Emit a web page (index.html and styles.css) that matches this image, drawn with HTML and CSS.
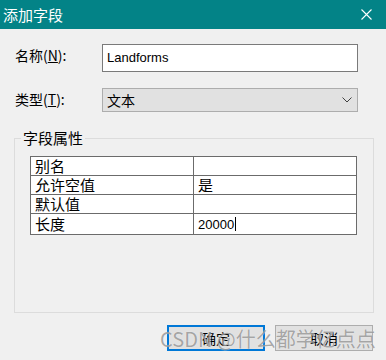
FILE: index.html
```html
<!DOCTYPE html>
<html lang="zh-CN">
<head>
    <meta charset="UTF-8">
    <title>添加字段</title>
    <link rel="stylesheet" href="styles.css">
</head>
<body>
    <div class="dialog">
        <div class="titlebar">
            <span class="title">添加字段</span>
            <svg class="close" width="11" height="11" viewBox="0 0 11 11">
                <path d="M0.5 0.5 L10.5 10.5 M10.5 0.5 L0.5 10.5" stroke="#fff" stroke-width="1.1" fill="none"/>
            </svg>
        </div>

        <div class="content">
            <div class="field-row">
                <label class="field-label">名称(<u>N</u>):</label>
                <div class="textbox">Landforms</div>
            </div>
            <div class="field-row combo-row">
                <label class="field-label">类型(<u>T</u>):</label>
                <div class="combo">
                    <span>文本</span>
                    <svg class="chevron" width="10" height="6" viewBox="0 0 10 6">
                        <path d="M0.5 0.5 L5 5 L9.5 0.5" stroke="#404040" stroke-width="1" fill="none"/>
                    </svg>
                </div>
            </div>

            <fieldset class="group">
                <legend>字段属性</legend>
                <table class="props">
                    <tr><td class="key">别名</td><td></td></tr>
                    <tr><td class="key">允许空值</td><td>是</td></tr>
                    <tr><td class="key">默认值</td><td></td></tr>
                    <tr><td class="key">长度</td><td><span class="num">20000</span><span class="caret"></span></td></tr>
                </table>
            </fieldset>

            <div class="buttons">
                <button class="btn btn-default">确定</button>
                <button class="btn">取消</button>
            </div>
        </div>

        <div class="watermark">CSDN @什么都学亿点点</div>
    </div>
</body>
</html>
```

FILE: styles.css
```css
body {
    margin: 0;
    background-color: #f0f0f0;
    font-family: "Noto Sans CJK SC", "Liberation Sans", sans-serif;
    color: #000;
}

.dialog {
    position: relative;
    width: 386px;
    height: 360px;
    overflow: hidden;
    background-color: #f0f0f0;
}

.titlebar {
    height: 29px;
    background-color: #038387;
    color: #fff;
    display: flex;
    align-items: center;
    justify-content: space-between;
    padding: 0 14px 0 3px;
    font-size: 15px;
}

.close {
    display: block;
}

.content {
    padding: 15px 12px 0 14px;
}

.field-row {
    display: flex;
    align-items: flex-start;
}

.combo-row {
    margin-top: 16px;
}

.field-label {
    width: 87px;
    padding-left: 1px;
    font-size: 14px;
    line-height: 20px;
    margin-top: 1px;
}

.field-label u {
    text-decoration-thickness: 1px;
}

.textbox {
    width: 256px;
    height: 28px;
    box-sizing: border-box;
    border: 1px solid #7a7a7a;
    background-color: #fff;
    padding-left: 4px;
    font-family: "Liberation Sans", sans-serif;
    font-size: 13px;
    line-height: 26px;
}

.combo {
    width: 256px;
    height: 24px;
    box-sizing: border-box;
    border: 1px solid #adadad;
    background-color: #e1e1e1;
    padding: 0 5px 0 4px;
    display: flex;
    align-items: center;
    justify-content: space-between;
    font-size: 14px;
}

.chevron {
    display: block;
}

/* 字段属性 분组 */
.group {
    margin: 16px 0 0 0;
    padding: 8px 16px 77px 15px;
    border: 1px solid #dcdcdc;
}

.group legend {
    margin-left: -9px;
    padding: 0 2px;
    font-size: 15px;
    line-height: 20px;
}

.props {
    width: 100%;
    border-collapse: collapse;
    background-color: #fff;
    font-size: 15px;
}

.props td {
    border: 1px solid #6b6b6b;
    height: 18px;
    padding: 0 4px;
    line-height: 18px;
    box-sizing: border-box;
}

.props td.key {
    width: 163px;
}

.num {
    font-family: "Liberation Sans", sans-serif;
    font-size: 13px;
}

.caret {
    display: inline-block;
    width: 1px;
    height: 14px;
    background-color: #000;
    vertical-align: -2px;
    margin-left: 1px;
}

.buttons {
    display: flex;
    justify-content: flex-end;
    gap: 10px;
    margin-top: 12px;
    margin-right: 1px;
}

.btn {
    width: 98px;
    height: 26px;
    box-sizing: border-box;
    border: 1px solid #adadad;
    background-color: #e1e1e1;
    font-family: "Noto Sans CJK SC", sans-serif;
    font-size: 14px;
    color: #000;
    padding: 0;
}

.btn-default {
    border: 2px solid #0078d7;
}

/* 워터마크 */
.watermark {
    position: absolute;
    left: 160px;
    top: 325px;
    font-size: 20px;
    line-height: 28px;
    color: rgba(110, 110, 110, 0.6);
    text-shadow: 0 0 1px rgba(255, 255, 255, 0.8);
    white-space: nowrap;
    pointer-events: none;
}
```
